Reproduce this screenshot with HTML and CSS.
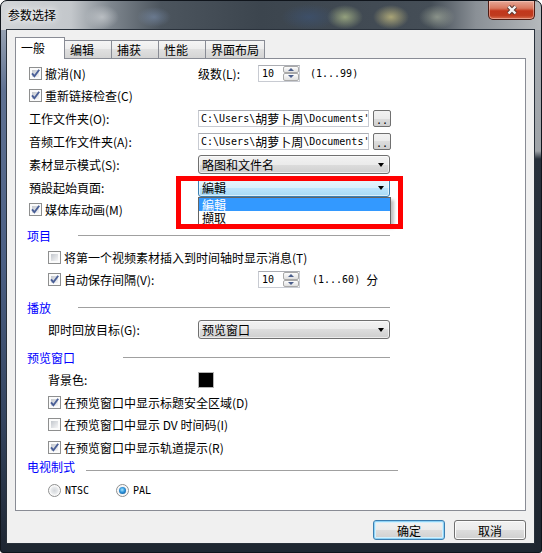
FILE: index.html
```html
<!DOCTYPE html>
<html lang="zh-CN">
<head>
    <meta charset="UTF-8">
    <title>参数选择</title>
    <link rel="stylesheet" href="styles.css">
</head>
<body>
<div class="window">
    <div class="titlebar">
        <span class="title">参数选择</span>
        <button class="close" type="button">
            <svg width="14" height="12" viewBox="0 0 14 12">
                <path class="x-edge" d="M3.5 2.5L10.5 9.5M10.5 2.5L3.5 9.5"/>
                <path class="x-face" d="M3.5 2.5L10.5 9.5M10.5 2.5L3.5 9.5"/>
            </svg>
        </button>
    </div>

    <div class="client">
        <ul class="tabs">
            <li class="tab active">一般</li>
            <li class="tab">编辑</li>
            <li class="tab">捕获</li>
            <li class="tab">性能</li>
            <li class="tab tab-wide">界面布局</li>
        </ul>

        <div class="panel">
            <div class="row tight">
                <label class="opt name">
                    <span class="cb"><svg class="tick" viewBox="0 0 13 13"><path d="M3 6.3l2.4 2.9L10.2 2.8"/></svg></span>撤消(N)
                </label>
                <span class="levels">级数(L):</span>
                <span class="spin">
                    <span class="spin-val">10</span>
                    <span class="spin-btns"><span class="spin-up"></span><span class="spin-down"></span></span>
                </span>
                <span class="range">(1...99)</span>
            </div>
            <div class="row">
                <label class="opt name">
                    <span class="cb"><svg class="tick" viewBox="0 0 13 13"><path d="M3 6.3l2.4 2.9L10.2 2.8"/></svg></span>重新链接检查(C)
                </label>
            </div>
            <div class="row">
                <span class="name">工作文件夹(O):</span>
                <span class="field">C:\Users\<span class="cjk">胡萝卜周</span>\Documents'</span>
                <button class="browse" type="button">..</button>
            </div>
            <div class="row">
                <span class="name">音频工作文件夹(A):</span>
                <span class="field">C:\Users\<span class="cjk">胡萝卜周</span>\Documents'</span>
                <button class="browse" type="button">..</button>
            </div>
            <div class="row">
                <span class="name">素材显示模式(S):</span>
                <span class="combo">略图和文件名</span>
            </div>
            <div class="row">
                <span class="name">預設起始頁面:</span>
                <div class="combo-wrap">
                    <span class="combo focus">編輯</span>
                    <ul class="droplist">
                        <li class="sel">編輯</li>
                        <li>擷取</li>
                    </ul>
                    <div class="mark"></div>
                </div>
            </div>
            <div class="row short">
                <label class="opt name">
                    <span class="cb"><svg class="tick" viewBox="0 0 13 13"><path d="M3 6.3l2.4 2.9L10.2 2.8"/></svg></span>媒体库动画(M)
                </label>
            </div>

            <div class="group"><span>项目</span><span class="rule"></span></div>
            <div class="row sub tight">
                <label class="opt"><span class="cb"></span>将第一个视频素材插入到时间轴时显示消息(T)</label>
            </div>
            <div class="row sub">
                <label class="opt name wide">
                    <span class="cb"><svg class="tick" viewBox="0 0 13 13"><path d="M3 6.3l2.4 2.9L10.2 2.8"/></svg></span>自动保存间隔(V):
                </label>
                <span class="spin">
                    <span class="spin-val">10</span>
                    <span class="spin-btns"><span class="spin-up"></span><span class="spin-down"></span></span>
                </span>
                <span class="range minutes">(1...60)</span><span class="unit">分</span>
            </div>

            <div class="group"><span>播放</span><span class="rule"></span></div>
            <div class="row sub">
                <span class="name">即时回放目标(G):</span>
                <span class="combo">预览窗口</span>
            </div>

            <div class="group"><span>预览窗口</span><span class="rule short"></span></div>
            <div class="row sub">
                <span class="name">背景色:</span>
                <span class="swatch"></span>
            </div>
            <div class="row sub tight">
                <label class="opt">
                    <span class="cb"><svg class="tick" viewBox="0 0 13 13"><path d="M3 6.3l2.4 2.9L10.2 2.8"/></svg></span>在预览窗口中显示标题安全区域(D)
                </label>
            </div>
            <div class="row sub">
                <label class="opt"><span class="cb"></span>在预览窗口中显示 DV 时间码(I)</label>
            </div>
            <div class="row sub tight">
                <label class="opt">
                    <span class="cb"><svg class="tick" viewBox="0 0 13 13"><path d="M3 6.3l2.4 2.9L10.2 2.8"/></svg></span>在预览窗口中显示轨道提示(R)
                </label>
            </div>

            <div class="group tv"><span>电视制式</span><span class="rule"></span></div>
            <div class="row sub tight radios">
                <label class="opt ntsc"><span class="rd"></span><span class="ascii">NTSC</span></label>
                <label class="opt"><span class="rd on"></span><span class="ascii">PAL</span></label>
            </div>
        </div>

        <div class="buttons">
            <button class="btn default" type="button">确定</button>
            <button class="btn" type="button">取消</button>
        </div>
    </div>
</div>
</body>
</html>
```

FILE: styles.css
```css
* {
    margin: 0;
    padding: 0;
    box-sizing: border-box;
}
body {
    font: 12px "Noto Sans CJK SC", sans-serif;
    color: #000;
    background: #fff;
}

/* окно с рамкой Aero */
.window {
    width: 542px;
    height: 553px;
    padding: 0 6px 8px 5px;
    display: flex;
    flex-direction: column;
    border: 1px solid #10151c;
    border-radius: 7px 7px 3px 3px;
    background:
        radial-gradient(closest-side, rgba(196, 200, 204, .8), transparent) 84px 4px / 34px 24px no-repeat,
        radial-gradient(closest-side, rgba(120, 140, 170, .6), transparent) 136px 6px / 34px 20px no-repeat,
        radial-gradient(closest-side, rgba(60, 84, 120, .6), transparent) 280px 3px / 56px 26px no-repeat,
        radial-gradient(closest-side, rgba(176, 190, 140, .75), transparent) 326px 4px / 36px 24px no-repeat,
        radial-gradient(closest-side, rgba(204, 194, 130, .75), transparent) 372px 4px / 36px 24px no-repeat,
        radial-gradient(closest-side, rgba(170, 178, 160, .65), transparent) 418px 4px / 36px 24px no-repeat,
        linear-gradient(90deg, #d2d5d8 0, #c3c7cb 70px, #7e868e 110px, #4c555e 160px, #3c454e 260px, #454e57 430px, #8a9096 475px, #b5b9bc 540px) 0 0 / 100% 29px no-repeat,
        linear-gradient(#a9aeb3 0, #9ea3a8 150px, #28313c 158px, #1e2630 100%) right 0 top 0 / 7px 100% no-repeat,
        linear-gradient(#b0b8c1 0, #5f7192 90px, #4b5f84 260px, #34445f 420px, #1d2531 100%) 0 0 / 6px 100% no-repeat,
        #1f2731;
}
.titlebar {
    height: 28px;
    display: flex;
    justify-content: space-between;
}
.title {
    align-self: center;
    margin-left: 2px;
    line-height: 14px;
    text-shadow: 0 0 6px #fff, 0 0 10px rgba(255, 255, 255, .8);
}
.close {
    width: 47px;
    height: 19px;
    display: flex;
    align-items: center;
    justify-content: center;
    border: 1px solid #4e1c14;
    border-top: 0;
    border-radius: 0 0 5px 5px;
    background: linear-gradient(#e6a897 0, #d9785f 40%, #c2371c 55%, #bf3b1f 80%, #d76e4f 100%);
    box-shadow: inset 0 0 0 1px rgba(255, 220, 210, .45);
}
.x-edge {
    fill: none;
    stroke: #5a3a33;
    stroke-width: 4.4;
}
.x-face {
    fill: none;
    stroke: #f5f5f5;
    stroke-width: 2.4;
}

.client {
    flex: 1;
    display: flex;
    flex-direction: column;
    padding: 7px 8px 3px;
    border: 1px solid #29313b;
    background: #f0f0f0;
}

/* вкладки */
.tabs {
    list-style: none;
    display: flex;
    align-items: flex-end;
    height: 22px;
    margin-bottom: -1px;
    position: relative;
    z-index: 1;
}
.tab {
    height: 18px;
    margin: 0 0 1px -1px;
    padding: 0 17px 0 5px;
    display: flex;
    align-items: center;
    border: 1px solid #898c95;
    border-bottom: 0;
    background: linear-gradient(#f5f5f5 0, #ececec 50%, #e0e0e0 50%, #d4d4d4 100%);
}
.tab.active {
    height: 22px;
    margin: 0;
    padding: 0 19px 2px 5px;
    background: #fff;
    position: relative;
    z-index: 1;
}
.tab-wide {
    padding-right: 5px;
}

.panel {
    height: 453px;
    padding-top: 3px;
    border: 1px solid #898c95;
    background: #fff;
}

/* строки настроек */
.row {
    display: flex;
    align-items: center;
    height: 23px;
    padding-left: 13px;
    white-space: nowrap;
}
.row.tight {
    height: 22px;
}
.row.short {
    height: 20px;
}
.row.sub {
    padding-left: 32px;
}
.name {
    width: 169px;
}
.sub .name {
    width: 150px;
}
.sub .name.wide {
    width: 210px;
}
.opt {
    display: flex;
    align-items: center;
    gap: 3px;
}
.levels {
    width: 60px;
}

.cb {
    width: 13px;
    height: 13px;
    padding: 2px;
    position: relative;
    border: 1px solid #8e8f8f;
    background: linear-gradient(135deg, #c3c7cd, #f6f6f7) content-box, #fbfbfb;
}
.tick {
    position: absolute;
    left: -1px;
    top: -1px;
    width: 13px;
    height: 13px;
}
.tick path {
    fill: none;
    stroke: #4a5f97;
    stroke-width: 1.9;
}

.rd {
    width: 13px;
    height: 13px;
    display: flex;
    align-items: center;
    justify-content: center;
    border: 1px solid #8e8f8f;
    border-radius: 50%;
    background: radial-gradient(circle, #d3d6da 0, #e9ebed 45%, #fbfbfb 62%);
}
.rd.on::after {
    content: "";
    width: 7px;
    height: 7px;
    border-radius: 50%;
    background: radial-gradient(circle at 45% 40%, #a4e6ff 0, #2d92da 45%, #0b4a85 100%);
}
.ntsc {
    width: 68px;
}
.radios .opt {
    gap: 4px;
}
.ascii {
    font: 10px "DejaVu Sans Mono", monospace;
}

.spin {
    display: flex;
    width: 42px;
    height: 17px;
    border: 1px solid #c8cbd2;
    border-top-color: #abadb3;
    background: #fff;
}
.spin-val {
    flex: 1;
    padding-left: 3px;
    font: 10px/15px "DejaVu Sans Mono", monospace;
}
.spin-btns {
    width: 16px;
    display: flex;
    flex-direction: column;
}
.spin-btns span {
    flex: 1;
    display: flex;
    align-items: center;
    justify-content: center;
    border: 1px solid #a9a9a9;
    border-radius: 2px;
    background: linear-gradient(#fdfdfd, #e0e0e0);
}
.spin-up::before,
.spin-down::before {
    content: "";
    border-left: 3px solid transparent;
    border-right: 3px solid transparent;
}
.spin-up::before {
    border-bottom: 3px solid #4b5e8c;
}
.spin-down::before {
    border-top: 3px solid #4b5e8c;
}
.range {
    margin-left: 10px;
    font: 10px "DejaVu Sans Mono", monospace;
}
.range.minutes {
    margin-left: 12px;
    margin-right: 6px;
}

.field {
    width: 171px;
    height: 17px;
    padding-left: 2px;
    display: flex;
    align-items: center;
    overflow: hidden;
    border: 1px solid #c8cbd2;
    border-top-color: #abadb3;
    background: #fff;
    font: 10px "DejaVu Sans Mono", monospace;
}
.cjk {
    font: 12px "Noto Sans CJK SC", sans-serif;
}
.browse {
    width: 18px;
    height: 17px;
    margin-left: 4px;
    padding-top: 5px;
    border: 1px solid #707070;
    border-radius: 2px;
    background: linear-gradient(#f2f2f2 0, #ebebeb 50%, #dddddd 50%, #cfcfcf 100%);
    font: 10px/8px "DejaVu Sans Mono", monospace;
}

.combo {
    width: 192px;
    height: 19px;
    padding: 0 5px 0 3px;
    display: flex;
    align-items: center;
    justify-content: space-between;
    border: 1px solid #707070;
    border-radius: 3px;
    background: linear-gradient(#f2f2f2 0, #ebebeb 50%, #dddddd 50%, #cfcfcf 100%);
    box-shadow: inset 0 0 0 1px rgba(255, 255, 255, .6);
}
.combo::after {
    content: "";
    border-top: 4px solid #000;
    border-left: 3.5px solid transparent;
    border-right: 3.5px solid transparent;
}
.combo.focus {
    border-color: #3c7fb1;
    background: linear-gradient(#eaf6fd 0, #d9f0fc 50%, #bee6fd 50%, #a7d9f5 100%);
}
.combo-wrap {
    position: relative;
}
.droplist {
    position: absolute;
    left: 0;
    top: 100%;
    width: 193px;
    list-style: none;
    border: 1px solid #646464;
    background: #fff;
    box-shadow: 3px 3px 3px rgba(0, 0, 0, .25);
    z-index: 2;
}
.droplist li {
    height: 13px;
    display: flex;
    align-items: center;
    padding-left: 3px;
    line-height: 12px;
}
.droplist .sel {
    background: #3399ff;
    color: #fff;
}
/* красная рамка-пометка */
.mark {
    position: absolute;
    left: -22px;
    top: -2px;
    width: 227px;
    height: 53px;
    border: 5px solid #f00;
    z-index: 3;
}

.swatch {
    width: 16px;
    height: 16px;
    border: 1px solid #b4b4b4;
    background: #000;
}

/* заголовки групп */
.group {
    display: flex;
    align-items: center;
    justify-content: space-between;
    width: 374px;
    height: 22px;
    margin-top: 5px;
    padding-left: 11px;
    color: #0000ff;
}
.group.tv {
    width: 382px;
    height: 16px;
    margin-top: 0;
}
.rule {
    width: 312px;
    height: 1px;
    background: #a0a0a0;
}
.rule.short {
    width: 267px;
}
.tv .rule {
    margin-top: 8px;
}
.radios {
    margin-top: 5px;
}

.buttons {
    display: flex;
    justify-content: flex-end;
    gap: 9px;
    margin-top: 9px;
}
.btn {
    width: 72px;
    height: 20px;
    border: 1px solid #707070;
    border-radius: 3px;
    background: linear-gradient(#f2f2f2 0, #ebebeb 50%, #dddddd 50%, #cfcfcf 100%);
    box-shadow: inset 0 0 0 1px #fcfcfc;
    font: 12px "Noto Sans CJK SC", sans-serif;
}
.btn.default {
    border-color: #3c7fb1;
    box-shadow: inset 0 0 0 1px #8fd3f6, inset 0 0 0 2px #d3effc;
}
```
